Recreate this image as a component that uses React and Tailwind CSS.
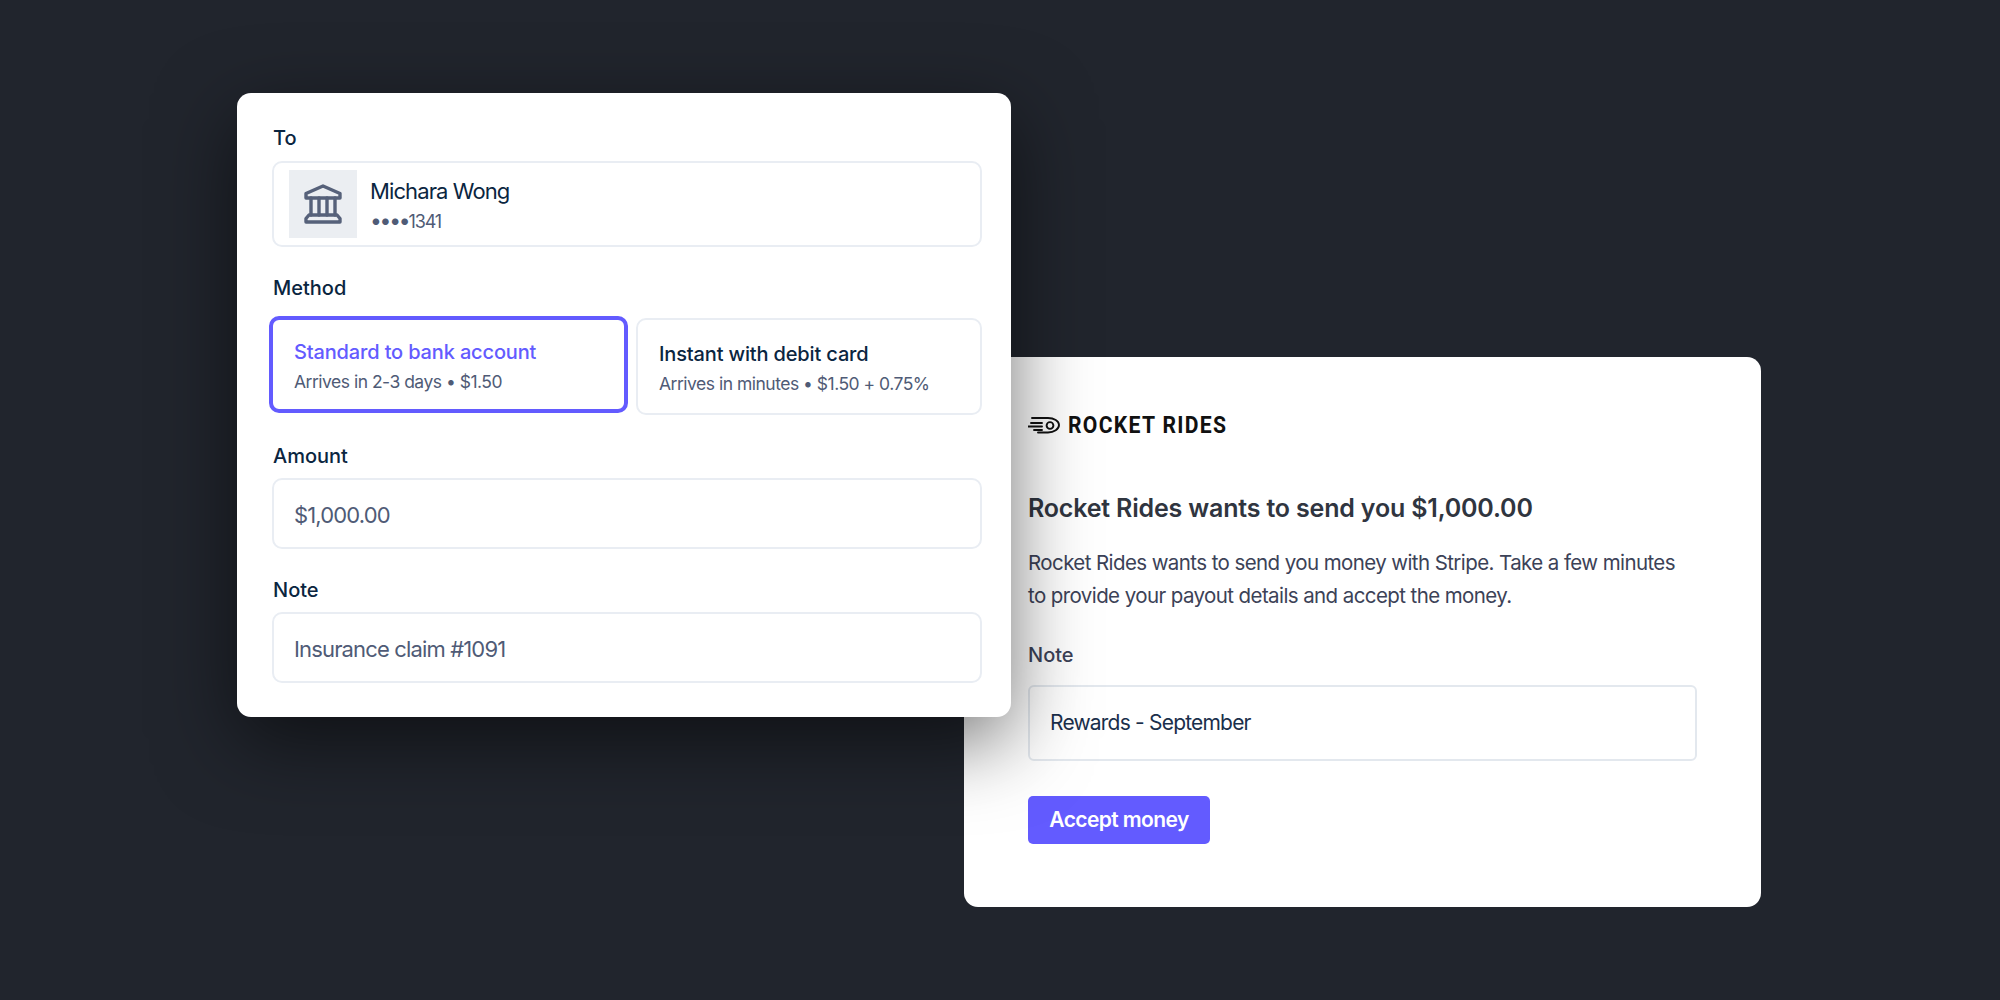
const inter = "font-['Inter','Noto_Sans',sans-serif]";

const BankIcon = () => (
  <svg width="40" height="42" viewBox="0 0 40 42" fill="none" stroke="#56617a" strokeWidth="3.4" strokeLinejoin="round" strokeLinecap="round">
    <path d="M20 3 L37 10.5 V15 H3 V10.5 Z" />
    <path d="M8 15 V32 M16 15 V32 M24 15 V32 M32 15 V32" />
    <path d="M6 32 H34 L37 35.5 V39 H3 V35.5 Z" />
  </svg>
);

const RocketIcon = () => (
  <svg width="32" height="20" viewBox="0 0 32 20" fill="none" stroke="#111" strokeWidth="1.9" strokeLinecap="round">
    <path d="M3 8 H14 M0 11.5 H14 M6 15 H14 M4 3 H20 C26 3 31 6 31 10 C31 14 26 17.5 20 17.5 H10" />
    <circle cx="22" cy="10.5" r="3.4" />
  </svg>
);

const Label = ({ children, className = "" }) => (
  <p className={`text-[20px] leading-[28px] font-medium text-[#0a2540] ${className}`}>{children}</p>
);

const MethodCard = ({ title, detail, selected }) => (
  <div
    className={
      selected
        ? "w-[359px] h-[97px] rounded-[10px] border-[4px] border-[#635bff] pl-[21px] pt-[18px]"
        : "w-[346px] h-[97px] mt-[2px] rounded-[10px] border-2 border-[#e9edf3] pl-[21px] pt-[20px]"
    }
  >
    <p className={`text-[20px] leading-[28px] font-medium tracking-[-0.15px] ${selected ? "text-[#635bff]" : "text-[#0a2540]"}`}>{title}</p>
    <p className="mt-[4px] text-[17.5px] leading-[24px] tracking-[-0.5px] text-[#4f5b76]">{detail}</p>
  </div>
);

const Field = ({ value }) => (
  <div className="flex h-[71px] items-center rounded-[10px] border-2 border-[#e9edf3] pl-[20px] pt-[4px] text-[22px] tracking-[-0.85px] text-[#4f5b76]">
    {value}
  </div>
);

const PayoutCard = () => (
  <div className="relative z-10 ml-[237px] mt-[93px] h-[624px] w-[774px] shrink-0 rounded-[14px] bg-white pl-[35px] pr-[29px] pt-[31px] shadow-[0_24px_80px_rgba(0,0,0,0.55)]">
    <Label className="pl-[1px]">To</Label>
    <div className="mt-[9px] flex h-[86px] items-center rounded-[10px] border-2 border-[#e9edf3] pl-[15px]">
      <div className="flex h-[68px] w-[68px] items-center justify-center bg-[#ebeef2]">
        <BankIcon />
      </div>
      <div className="ml-[13px] pt-[1px]">
        <p className="text-[22px] leading-[30px] tracking-[-0.9px] text-[#0a2540]">Michara Wong</p>
        <p className="mt-[4px] text-[18px] leading-[24px] tracking-[-1.1px] text-[#4f5b76]">
          <span className="text-[21px] leading-none tracking-[-2.2px]">••••</span>1341
        </p>
      </div>
    </div>
    <Label className="mt-[27px] pl-[1px]">Method</Label>
    <div className="mt-[14px] -ml-[3px] flex gap-[8px]">
      <MethodCard selected title="Standard to bank account" detail="Arrives in 2-3 days • $1.50" />
      <MethodCard title="Instant with debit card" detail="Arrives in minutes • $1.50 + 0.75%" />
    </div>
    <Label className="mt-[27px] pl-[1px]">Amount</Label>
    <div className="mt-[8px]"><Field value="$1,000.00" /></div>
    <Label className="mt-[27px] pl-[1px]">Note</Label>
    <div className="mt-[8px]"><Field value="Insurance claim #1091" /></div>
  </div>
);

const InviteCard = () => (
  <div className="-ml-[47px] mt-[357px] h-[550px] w-[797px] shrink-0 rounded-[14px] bg-white pl-[64px] pt-[56px]">
    <div className="flex h-[24px] items-center gap-[8px]">
      <RocketIcon />
      <span className="origin-left scale-x-[0.88] font-['Roboto',sans-serif] text-[24px] font-bold tracking-[1.5px] text-[#111]">ROCKET RIDES</span>
    </div>
    <h1 className="mt-[53px] text-[25px] leading-[36px] font-semibold tracking-[-0.18px] text-[#30353f]">Rocket Rides wants to send you $1,000.00</h1>
    <p className="mt-[20px] text-[20.5px] leading-[33px] tracking-[-0.59px] text-[#3c4257]">
      Rocket Rides wants to send you money with Stripe. Take a few minutes
      <br />
      to provide your payout details and accept the money.
    </p>
    <p className="mt-[29px] text-[20px] leading-[28px] font-medium text-[#3c4257]">Note</p>
    <div className="mt-[16px] flex h-[76px] w-[669px] items-center rounded-[6px] border-2 border-[#e3e8ee] pl-[20px] text-[21px] tracking-[-0.8px] text-[#1a2f4b]">
      Rewards - September
    </div>
    <button className="mt-[35px] h-[48px] w-[182px] rounded-[5px] bg-[#635bff] text-[21px] font-semibold tracking-[-0.6px] text-white">
      Accept money
    </button>
  </div>
);

export default function App() {
  return (
    <div className={`flex h-[1000px] w-[2000px] items-start overflow-hidden bg-[#21252d] ${inter}`}>
      <PayoutCard />
      <InviteCard />
    </div>
  );
}
